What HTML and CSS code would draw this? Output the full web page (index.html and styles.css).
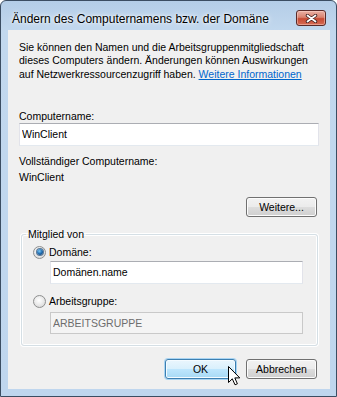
FILE: index.html
```html
<!DOCTYPE html>
<html lang="de">
<head>
  <meta charset="UTF-8">
  <title>Ändern des Computernamens bzw. der Domäne</title>
  <link rel="stylesheet" href="styles.css">
</head>
<body>
  <div class="window">
    <div class="titlebar">
      <span class="title">Ändern des Computernamens bzw. der Domäne</span>
      <button class="close" title="Schließen">
        <svg width="13" height="9" viewBox="0 0 13 9">
          <path d="M2.5 1.5 L10.5 7.5 M10.5 1.5 L2.5 7.5" stroke="#3a1a1a" stroke-width="3.4" stroke-linecap="round"/>
          <path d="M2.5 1.5 L10.5 7.5 M10.5 1.5 L2.5 7.5" stroke="#ffffff" stroke-width="1.8" stroke-linecap="round"/>
        </svg>
      </button>
    </div>

    <div class="content">
      <p class="intro">
        Sie können den Namen und die Arbeitsgruppenmitgliedschaft<br>
        dieses Computers ändern. Änderungen können Auswirkungen<br>
        auf Netzwerkressourcenzugriff haben. <a href="#">Weitere Informationen</a>
      </p>

      <label class="label first" for="computerName">Computername:</label>
      <input type="text" id="computerName" class="textbox" value="WinClient">

      <div class="label full">Vollständiger Computername:</div>
      <div class="label value">WinClient</div>

      <div class="button-row more">
        <button class="btn">Weitere...</button>
      </div>

      <fieldset class="group">
        <legend>Mitglied von</legend>
        <div class="group-inner">
          <div class="option">
            <span class="radio checked"></span>
            <span>Domäne:</span>
          </div>
          <input type="text" class="textbox sub" value="Domänen.name">

          <div class="option second">
            <span class="radio"></span>
            <span>Arbeitsgruppe:</span>
          </div>
          <input type="text" class="textbox sub disabled" value="ARBEITSGRUPPE" disabled>
        </div>
      </fieldset>

      <div class="button-row actions">
        <button class="btn hover">OK</button>
        <button class="btn">Abbrechen</button>
      </div>
    </div>

    <!-- mouse pointer over the OK button -->
    <svg class="pointer" width="13" height="20" viewBox="0 0 13 20">
      <path d="M0.5 0.5 L0.5 16.5 L4.3 12.8 L7 18.8 L9.4 17.8 L6.8 11.9 L11.8 11.9 Z" fill="#ffffff" stroke="#000000" stroke-width="1" stroke-linejoin="round"/>
    </svg>
  </div>
</body>
</html>
```

FILE: styles.css
```css
body {
  margin: 0;
  background-color: #ffffff;
  font-family: "Liberation Sans", Arial, sans-serif;
  font-size: 10.5px;
  color: #000000;
}

.window {
  position: relative;
  width: 337px;
  height: 397px;
  box-sizing: border-box;
  border: 1px solid #3b4d62;
  border-radius: 6px 6px 0 0;
  background: linear-gradient(180deg, #b4cde7 0%, #c2d8ee 30px, #bfd6ee 100%);
  padding: 0 6px 7px 7px;
  display: flex;
  flex-direction: column;
}

.titlebar {
  height: 29px;
  box-sizing: border-box;
  padding: 9px 4px 0 4px;
  display: flex;
  align-items: flex-start;
  justify-content: space-between;
}

.title {
  margin-top: 2px;
  font-size: 12px;
  line-height: 14px;
  white-space: nowrap;
  text-shadow: 0 0 6px #ffffff, 0 0 3px #ffffff;
}

.close {
  width: 30px;
  height: 16px;
  padding: 0;
  border: 1px solid #5a2a28;
  border-radius: 3px;
  background: linear-gradient(180deg, #eab1a5 0%, #d9826f 45%, #c64a33 55%, #d66c55 100%);
  box-shadow: inset 0 0 0 1px rgba(255, 220, 210, 0.45);
  display: flex;
  align-items: center;
  justify-content: center;
}

.content {
  flex: 1;
  background-color: #f0f0f0;
  padding: 11px 11px 0 11px;
  display: flex;
  flex-direction: column;
}

.intro {
  margin: 0;
  line-height: 13.3px;
  white-space: nowrap;
}

.intro a {
  color: #0066cc;
  text-decoration: underline;
}

.label {
  display: block;
  line-height: 13px;
}

.label.first {
  margin-top: 29px;
}

.label.full {
  margin-top: 9px;
}

.label.value {
  margin-top: 3px;
}

.textbox {
  height: 23px;
  box-sizing: border-box;
  margin: 0;
  padding: 0 2px;
  border: 1px solid #e2e3ea;
  border-top-color: #abadb3;
  border-bottom-color: #e3e9ef;
  background-color: #ffffff;
  font-family: inherit;
  font-size: 10.5px;
  color: #000000;
  outline: none;
}

.textbox.sub {
  margin-left: 17px;
  width: 253px;
}

.textbox.disabled {
  height: 22px;
  margin-top: 2px;
  background-color: #f4f4f4;
  border-color: #c9c9c9;
  color: #6d6d6d;
}

.button-row {
  display: flex;
  justify-content: flex-end;
  gap: 10px;
  padding-right: 2px;
}

.button-row.more {
  margin-top: 13px;
}

.button-row.actions {
  margin-top: 13px;
}

.btn {
  width: 71px;
  height: 20px;
  padding: 0;
  border: 1px solid #707070;
  border-radius: 3px;
  background: linear-gradient(180deg, #f2f2f2 0%, #ebebeb 50%, #dddddd 51%, #cfcfcf 100%);
  box-shadow: inset 0 0 0 1px #fcfcfc;
  font-family: inherit;
  font-size: 10.5px;
  color: #000000;
}

.btn.hover {
  border-color: #3c7fb1;
  background: linear-gradient(180deg, #eaf6fd 0%, #d9f0fc 50%, #bee6fd 51%, #a7d9f5 100%);
  box-shadow: inset 0 0 0 1px #f4fbff, 0 0 0 1px #a9d4f2;
}

.group {
  margin: 11px 1px 0 2px;
  padding: 0 0 11px 4px;
  border: 1px solid #d5dfe5;
  border-radius: 3px;
  box-shadow: inset 0 0 0 1px #ffffff, 0 0 0 1px #ffffff;
}

.group legend {
  padding: 0 2px;
  line-height: 13px;
}

.group-inner {
  padding: 5px 0 0 7px;
  display: flex;
  flex-direction: column;
  align-items: flex-start;
}

.option {
  display: flex;
  align-items: center;
  gap: 3px;
  height: 13px;
  line-height: 13px;
  margin-bottom: 2px;
}

.option.second {
  margin-top: 11px;
}

.radio {
  width: 13px;
  height: 13px;
  box-sizing: border-box;
  border: 1px solid #8e8f8f;
  border-radius: 50%;
  background: radial-gradient(circle at 45% 40%, #ffffff 0%, #eeeeee 40%, #cfcfcf 100%);
  display: flex;
  align-items: center;
  justify-content: center;
}

.radio.checked::after {
  content: "";
  width: 6px;
  height: 6px;
  border-radius: 50%;
  background: radial-gradient(circle at 40% 35%, #7cc8f5 0%, #1f6cb0 50%, #0b2f5c 100%);
  box-shadow: 0 0 0 1px #5a7896;
}

.pointer {
  position: absolute;
  left: 227px;
  top: 365px;
}
```
